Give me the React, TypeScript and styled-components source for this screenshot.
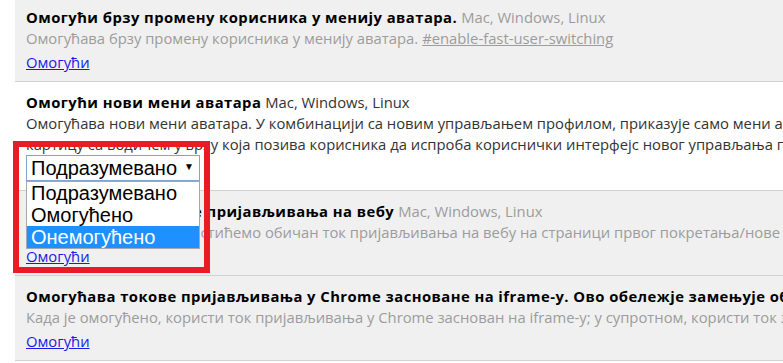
import React from "react";
import styled, { createGlobalStyle } from "styled-components";

const GlobalStyle = createGlobalStyle`
  html, body {
    margin: 0;
    padding: 0;
    background: #ffffff;
    overflow: hidden;
  }
  body {
    font-family: "Open Sans", "Noto Sans", "DejaVu Sans", sans-serif;
  }
`;

const Page = styled.div`
  position: relative;
  width: 783px;
  height: 363px;
  overflow: hidden;
  padding-left: 15px;
  box-sizing: border-box;
`;

const List = styled.div`
  margin-top: -3px;
  width: 1400px;
`;

const Row = styled.div<{ $enabled?: boolean }>`
  background: ${(p) => (p.$enabled ? "#ffffff" : "#f0f0f0")};
  border-bottom: 1px solid #d2d2d2;
  padding: 9px 0 9px 11px;
  font-size: 14.8px;
  white-space: nowrap;
`;

const TitleLine = styled.div`
  line-height: 22px;
  height: 22px;
`;

const Name = styled.span`
  font-weight: 700;
  color: #000000;
  letter-spacing: 0.45px;
`;

const Platforms = styled.span<{ $enabled?: boolean }>`
  color: ${(p) => (p.$enabled ? "#333333" : "#9c9c9c")};
  margin-left: 4px;
`;

const Description = styled.div<{ $enabled?: boolean }>`
  line-height: 21px;
  color: ${(p) => (p.$enabled ? "#333333" : "#9c9c9c")};
`;

const Permalink = styled.a`
  color: #9c9c9c;
  text-decoration: underline;
  margin-left: 4px;
`;

const ActionLink = styled.a`
  display: inline-block;
  margin-top: 4px;
  line-height: 19px;
  color: #1a1ae6;
  text-decoration: underline;
  cursor: pointer;
`;

const SelectWrap = styled.div`
  position: relative;
  width: 174px;
`;

const SelectBox = styled.div`
  box-sizing: border-box;
  height: 26px;
  width: 174px;
  border: 1px solid #86a3cf;
  background: #ffffff;
  display: flex;
  align-items: center;
  justify-content: space-between;
  padding: 0 5px 0 4px;
  font-family: "Liberation Sans", Arial, sans-serif;
  font-size: 20px;
  color: #000000;
`;

const Arrow = styled.span`
  font-size: 10px;
  line-height: 1;
  color: #000;
  margin-top: -2px;
`;

const Options = styled.ul`
  position: absolute;
  left: 0;
  top: 26px;
  z-index: 2;
  box-sizing: border-box;
  width: 174px;
  margin: 0;
  padding: 0;
  list-style: none;
  border: 1px solid #a4a8ae;
  background: #ffffff;
  font-family: "Liberation Sans", Arial, sans-serif;
  font-size: 20px;
`;

const Option = styled.li<{ $selected?: boolean }>`
  height: 22px;
  line-height: 22px;
  padding-left: 4px;
  background: ${(p) => (p.$selected ? "#1e90ff" : "#ffffff")};
  color: ${(p) => (p.$selected ? "#ffffff" : "#000000")};
`;

const Annotation = styled.div`
  position: absolute;
  left: 13px;
  top: 141px;
  width: 197px;
  height: 132px;
  box-sizing: border-box;
  border: 6px solid #e81c25;
  z-index: 3;
  pointer-events: none;
`;

const PLATFORMS = "Mac, Windows, Linux";

export default function App() {
  return (
    <>
      <GlobalStyle />
      <Page>
        <List>
          <Row>
            <TitleLine>
              <Name>Омогући брзу промену корисника у менију аватара.</Name>
              <Platforms>{PLATFORMS}</Platforms>
            </TitleLine>
            <Description>
              Омогућава брзу промену корисника у менију аватара.
              <Permalink>#enable-fast-user-switching</Permalink>
            </Description>
            <ActionLink>Омогући</ActionLink>
          </Row>

          <Row $enabled>
            <TitleLine>
              <Name>Омогући нови мени аватара</Name>
              <Platforms $enabled>{PLATFORMS}</Platforms>
            </TitleLine>
            <Description $enabled>
              Омогућава нови мени аватара. У комбинацији са новим управљањем
              профилом, приказује само мени аватара и наместо дијалога приказује
            </Description>
            <Description $enabled>
              картицу са водичем у врху која позива корисника да испроба
              кориснички интерфејс новог управљања профилом.
              <Permalink>#enable-new-avatar-menu</Permalink>
            </Description>
            <SelectWrap>
              <SelectBox>
                Подразумевано
                <Arrow>▼</Arrow>
              </SelectBox>
              <Options>
                <Option>Подразумевано</Option>
                <Option>Омогућено</Option>
                <Option $selected>Онемогућено</Option>
              </Options>
            </SelectWrap>
          </Row>

          <Row>
            <TitleLine>
              <Name>Омогући нове токове пријављивања на вебу</Name>
              <Platforms>{PLATFORMS}</Platforms>
            </TitleLine>
            <Description>
              Када је омогућено, користићемо обичан ток пријављивања на вебу на
              страници првог покретања/нове картице.
              <Permalink>#enable-web-based-signin</Permalink>
            </Description>
            <ActionLink>Омогући</ActionLink>
          </Row>

          <Row>
            <TitleLine>
              <Name>
                Омогућава токове пријављивања у Chrome засноване на iframe-у.
                Ово обележје замењује обележје за веб пријављивање.
              </Name>
              <Platforms>{PLATFORMS}</Platforms>
            </TitleLine>
            <Description>
              Када је омогућено, користи ток пријављивања у Chrome заснован на
              iframe-у; у супротном, користи ток заснован на веб приказу.
              <Permalink>#enable-iframe-based-signin</Permalink>
            </Description>
            <ActionLink>Омогући</ActionLink>
          </Row>
        </List>
        <Annotation />
      </Page>
    </>
  );
}
